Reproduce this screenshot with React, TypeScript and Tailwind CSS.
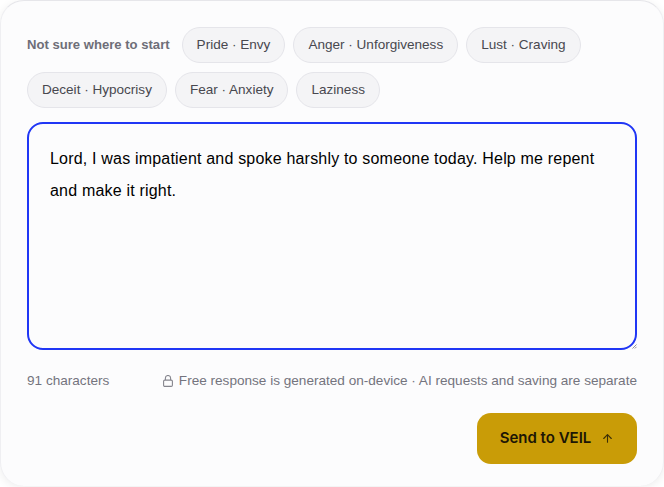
import { ArrowUp } from "lucide-react"

const row1 = ["Pride · Envy", "Anger · Unforgiveness", "Lust · Craving"]
const row2 = ["Deceit · Hypocrisy", "Fear · Anxiety", "Laziness"]

function Chip({ label }: { label: string }) {
  return (
    <button className="h-[36px] px-[14px] rounded-full border border-[#e5e5ea] bg-[#f4f4f6] text-[13.55px] text-[#48484f] whitespace-nowrap">
      {label}
    </button>
  )
}

export default function App() {
  return (
    <div className="w-[664px] h-[487px] bg-white font-['Liberation_Sans',Arial,sans-serif]">
      <div className="h-[486px] rounded-[24px] border-t border-x border-t-[#e6e6ea] border-x-[#efeff2] bg-[#fcfcfd] px-[26px] pt-[26px] shadow-[0_2px_10px_rgba(0,0,0,0.07)]">
        {/* Suggestions */}
        <div className="flex items-center gap-2">
          <span className="mr-1 text-[13.1px] font-bold text-[#6e6e78] whitespace-nowrap">Not sure where to start</span>
          {row1.map((c) => (
            <Chip key={c} label={c} />
          ))}
        </div>
        <div className="flex items-center gap-2 mt-[9px]">
          {row2.map((c) => (
            <Chip key={c} label={c} />
          ))}
        </div>

        {/* Prayer input */}
        <div className="relative mt-[14px]">
          <textarea
            className="block w-full h-[228px] resize-none rounded-[16px] border-2 border-[#2036f5] bg-transparent px-[21px] pt-[19px] text-[16px] tracking-[0.19px] leading-[32px] text-black outline-none"
            defaultValue="Lord, I was impatient and spoke harshly to someone today. Help me repent and make it right."
          />
          <svg className="absolute right-0 bottom-[1px] h-[5px] w-[5px]" viewBox="0 0 5 5" fill="none" stroke="#77777f" strokeWidth="0.8">
            <path d="M0.5 4.5 4.5 0.5M2.8 4.5 4.5 2.8" />
          </svg>
        </div>

        {/* Footer */}
        <div className="flex items-center justify-between mt-[23px] h-[16px] text-[13.58px] text-[#74747e]">
          <span>91 characters</span>
          <span className="flex items-center gap-[6px]">
            <svg className="h-[12px] w-[10px]" viewBox="0 0 10 12" fill="none" stroke="#85858d" strokeWidth="1.1">
              <rect x="0.6" y="5.1" width="8.8" height="6.3" rx="1.2" />
              <path d="M2.4 5.1V3.1a2.6 2.6 0 0 1 5.2 0v2" />
            </svg>
            Free response is generated on-device · AI requests and saving are separate
          </span>
        </div>

        <div className="flex justify-end mt-[24px]">
          <button className="flex items-center justify-center gap-[10px] w-[160px] h-[51px] rounded-[14px] bg-[#c99c07] text-[15px] font-semibold text-[#1c1605] font-['Inter',sans-serif]">
            Send to VEIL
            <ArrowUp className="h-[13px] w-[13px] text-[#3a2e08]" strokeWidth={2} />
          </button>
        </div>
      </div>
    </div>
  )
}
